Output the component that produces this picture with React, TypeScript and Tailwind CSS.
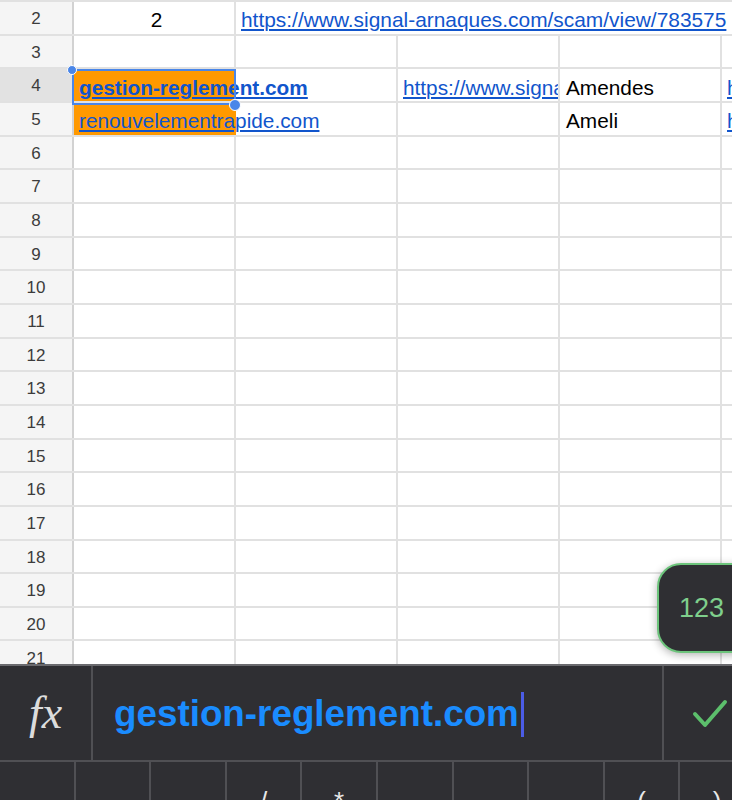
import React from "react";

const link = "text-[#1155cc] underline decoration-[1.5px] underline-offset-2";
const rows = [6, 7, 8, 9, 10, 11, 12, 13, 14, 15, 16, 17, 18, 19, 20, 21];
const keys = ["", "", "", "/", "*", "", "", "", "(", ")"];

function RowHead({ n, active }: { n: number; active?: boolean }) {
  return (
    <div
      className={`w-[74px] shrink-0 h-full flex items-center justify-center pt-[2px] border-r-2 border-[#d2d2d2] text-[17px] text-[#3c3c3c] ${
        active ? "bg-[#e2e2e2]" : "bg-[#f5f5f5]"
      }`}
    >
      {n}
    </div>
  );
}

function Cell({
  children,
  className = "",
  line = true,
}: {
  children?: React.ReactNode;
  className?: string;
  line?: boolean;
}) {
  return (
    <div
      className={`w-[162px] shrink-0 h-full flex items-center pl-[5px] pt-[4px] whitespace-nowrap ${
        line ? "border-r-2 border-[#e1e1e1]" : ""
      } ${className}`}
    >
      {children}
    </div>
  );
}

export default function App() {
  return (
    <div
      className="w-[732px] h-[800px] overflow-hidden bg-white flex flex-col"
      style={{ fontFamily: '"Liberation Sans", Arial, sans-serif' }}
    >
      {/* feuille */}
      <div className="relative h-[664px] shrink-0 overflow-hidden border-t-2 border-[#e1e1e1] text-[20.8px]">
        <div className="flex h-[33.67px] border-b-2 border-[#e1e1e1]">
          <RowHead n={2} />
          <Cell className="justify-center pl-0 text-black">2</Cell>
          <Cell line={false}>
            <span className={`${link} text-[20.9px]`}>https://www.signal-arnaques.com/scam/view/783575</span>
          </Cell>
        </div>

        <div className="flex h-[33.67px] border-b-2 border-[#e1e1e1]">
          <RowHead n={3} />
          <Cell />
          <Cell />
          <Cell />
          <Cell />
          <Cell />
        </div>

        <div className="flex h-[33.67px] border-b-2 border-[#e1e1e1]">
          <RowHead n={4} active />
          <Cell line={false} className="bg-[#ff9900]">
            <span className={`${link} font-bold`}>gestion-reglement.com</span>
          </Cell>
          <Cell />
          <Cell className="overflow-hidden">
            <span className={link}>https://www.signal-arnaques.com</span>
          </Cell>
          <Cell className="overflow-hidden bg-white text-black pl-[6px]">Amendes</Cell>
          <Cell className="overflow-hidden">
            <span className={link}>https://www.signal</span>
          </Cell>
        </div>

        <div className="flex h-[33.67px] border-b-2 border-[#e1e1e1]">
          <RowHead n={5} />
          <Cell line={false} className="bg-[#ff9900]">
            <span className={link}>renouvelementrapide.com</span>
          </Cell>
          <Cell />
          <Cell />
          <Cell className="text-black pl-[6px]">Ameli</Cell>
          <Cell className="overflow-hidden">
            <span className={link}>https://www.signal</span>
          </Cell>
        </div>

        {rows.map((n) => (
          <div key={n} className="flex h-[33.67px] border-b-2 border-[#e1e1e1]">
            <RowHead n={n} />
            <Cell />
            <Cell />
            <Cell />
            <Cell />
            <Cell />
          </div>
        ))}

        {/* sélection A4 */}
        <div className="absolute left-[72px] top-[67px] w-[164px] h-[36px] border-2 border-[#4a86e8]" />
        <div className="absolute left-[67px] top-[63px] w-[10px] h-[10px] rounded-full bg-[#4a86e8] border border-white" />
        <div className="absolute left-[229px] top-[97px] w-[12px] h-[12px] rounded-full bg-[#4a86e8] border border-white" />

        {/* bouton 123 */}
        <div className="absolute left-[657px] top-[561px] w-[100px] h-[90px] rounded-[24px] border-2 border-[#6cc47b] bg-[#2f2f33] shadow-[0_2px_8px_rgba(0,0,0,0.3)] flex items-center pl-[20px] text-[27px] text-[#7fcf8c]">
          123
        </div>
      </div>

      {/* barre de formule */}
      <div className="flex-1 bg-[#2f2f33] border-t-2 border-[#6a6a6e] flex flex-col">
        <div className="h-[96px] flex border-b-2 border-[#505054]">
          <div className="w-[93px] border-r-2 border-[#505054] flex items-center justify-center">
            <span
              className="text-[46px] italic text-[#dcdcdc] leading-none"
              style={{ fontFamily: '"Liberation Serif", "Times New Roman", serif' }}
            >
              fx
            </span>
          </div>
          <div className="w-[571px] border-r-2 border-[#505054] flex items-center pl-[21px] pt-[2px]">
            <span className="text-[36.8px] font-bold text-[#1a8cff] leading-none">
              gestion-reglement.com
            </span>
            <span className="ml-[2px] w-[3px] h-[45px] bg-[#4b5ce6]" />
          </div>
          <div className="flex-1 flex items-center pl-[28px] pt-[2px]">
            <svg width="36" height="30" viewBox="0 0 36 30" fill="none">
              <path
                d="M3 15 L13 26 L33 3"
                stroke="#5cbf6c"
                strokeWidth="4"
                strokeLinecap="round"
                strokeLinejoin="round"
              />
            </svg>
          </div>
        </div>
        <div className="flex-1 flex">
          {keys.map((k, i) => (
            <div
              key={i}
              className="w-[75.6px] shrink-0 border-r-2 border-[#505054] flex justify-center pt-[26px] text-[26px] text-[#e8e8e8] leading-none"
            >
              {k}
            </div>
          ))}
        </div>
      </div>
    </div>
  );
}
